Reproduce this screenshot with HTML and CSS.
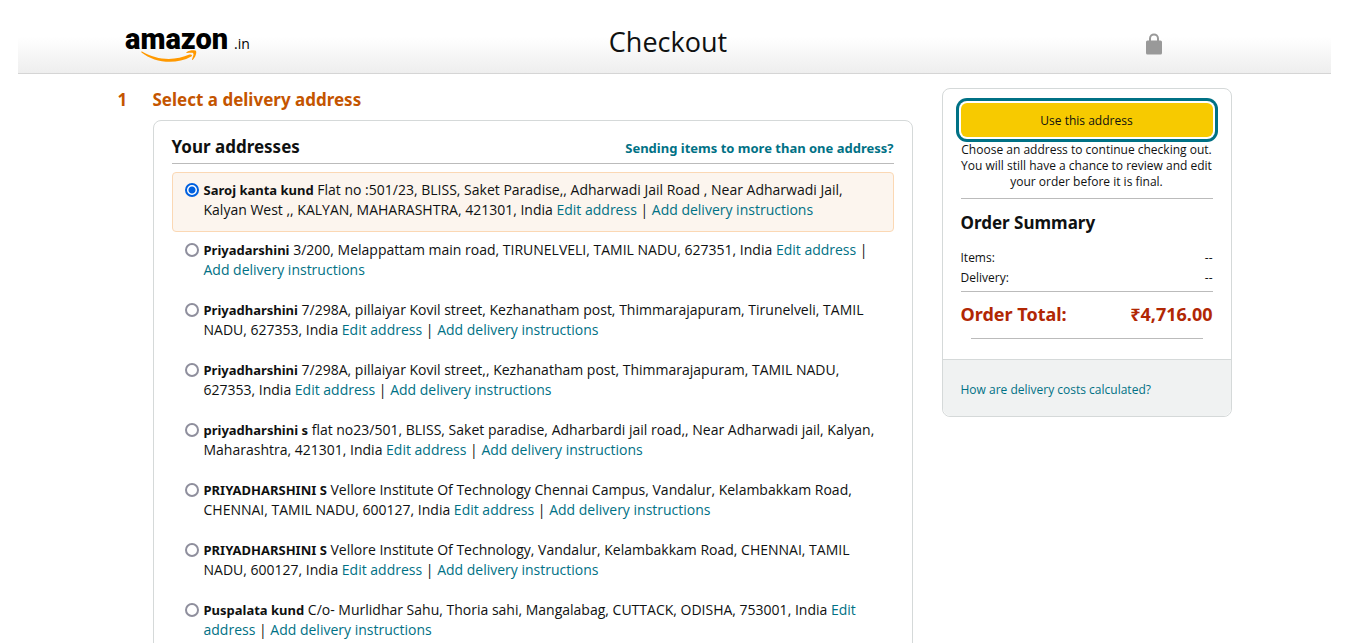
FILE: index.html
```html
<!DOCTYPE html>
<html lang="en">
<head>
<meta charset="utf-8">
<title>Checkout</title>
<link rel="stylesheet" href="styles.css">
</head>
<body>
<header class="site-header">
  <div class="header-inner">
    <a class="logo" href="#" aria-label="amazon.in">
      <svg width="126" height="42" viewBox="0 -3 126 42" overflow="visible">
        <text class="logo-name" x="0" y="23">amazon</text>
        <text class="logo-tld" x="109" y="23">.in</text>
        <path fill="#f90" d="M17 25.500C32 34.500 50 35 64.500 28.600C66.500 27.800 68 29.300 66.300 30.500C50 39.500 29 36.500 16.500 26.400C15.900 25.800 16.400 25.200 17 25.500ZM61.500 26.300C64.500 24 70 24 71 25C71.900 26.500 70.500 31.500 67.800 33.700C67.300 34.100 66.800 33.800 67 33.200C67.900 30.900 69 28.300 68.300 27.400C67.600 26.500 64.600 26.900 62 27.100C61.300 27.200 61 26.700 61.500 26.300Z"/>
      </svg>
    </a>
    <h1 class="page-title">Checkout</h1>
    <svg class="lock" width="16" height="22" viewBox="0 0 16 22" role="img" aria-label="Secure">
      <path d="M4 9V5.500C4 0 12 0 12 5.500V9" fill="none" stroke="#999" stroke-width="2"/>
      <rect y="7.500" width="16" height="14" rx="1.500" fill="#999"/>
    </svg>
  </div>
</header>
<main class="layout">
  <section class="step">
    <h2 class="step-title"><span class="step-number">1</span><span>Select a delivery address</span></h2>
    <div class="card addresses">
      <div class="addresses-head">
        <h3 class="heading">Your addresses</h3>
        <a class="multi" href="#">Sending items to more than one address?</a>
      </div>
      <div class="address selected">
        <input type="radio" name="address" id="a1" checked>
        <div><label for="a1"><b>Saroj kanta kund</b> Flat no :501/23, BLISS, Saket Paradise,, Adharwadi Jail Road , Near Adharwadi Jail,<br>Kalyan West ,, KALYAN, MAHARASHTRA, 421301, India</label> <a href="#">Edit address</a> | <a href="#">Add delivery instructions</a></div>
      </div>
      <div class="address">
        <input type="radio" name="address" id="a2">
        <div><label for="a2"><b>Priyadarshini</b> 3/200, Melappattam main road, TIRUNELVELI, TAMIL NADU, 627351, India</label> <a href="#">Edit address</a> |<br><a href="#">Add delivery instructions</a></div>
      </div>
      <div class="address">
        <input type="radio" name="address" id="a3">
        <div><label for="a3"><b>Priyadharshini</b> 7/298A, pillaiyar Kovil street, Kezhanatham post, Thimmarajapuram, Tirunelveli, TAMIL<br>NADU, 627353, India</label> <a href="#">Edit address</a> | <a href="#">Add delivery instructions</a></div>
      </div>
      <div class="address">
        <input type="radio" name="address" id="a4">
        <div><label for="a4"><b>Priyadharshini</b> 7/298A, pillaiyar Kovil street,, Kezhanatham post, Thimmarajapuram, TAMIL NADU,<br>627353, India</label> <a href="#">Edit address</a> | <a href="#">Add delivery instructions</a></div>
      </div>
      <div class="address">
        <input type="radio" name="address" id="a5">
        <div><label for="a5"><b>priyadharshini s</b> flat no23/501, BLISS, Saket paradise, Adharbardi jail road,, Near Adharwadi jail, Kalyan,<br>Maharashtra, 421301, India</label> <a href="#">Edit address</a> | <a href="#">Add delivery instructions</a></div>
      </div>
      <div class="address">
        <input type="radio" name="address" id="a6">
        <div><label for="a6"><b>PRIYADHARSHINI S</b> Vellore Institute Of Technology Chennai Campus, Vandalur, Kelambakkam Road,<br>CHENNAI, TAMIL NADU, 600127, India</label> <a href="#">Edit address</a> | <a href="#">Add delivery instructions</a></div>
      </div>
      <div class="address">
        <input type="radio" name="address" id="a7">
        <div><label for="a7"><b>PRIYADHARSHINI S</b> Vellore Institute Of Technology, Vandalur, Kelambakkam Road, CHENNAI, TAMIL<br>NADU, 600127, India</label> <a href="#">Edit address</a> | <a href="#">Add delivery instructions</a></div>
      </div>
      <div class="address">
        <input type="radio" name="address" id="a8">
        <div><label for="a8"><b>Puspalata kund</b> C/o- Murlidhar Sahu, Thoria sahi, Mangalabag, CUTTACK, ODISHA, 753001, India</label> <a href="#">Edit<br>address</a> | <a href="#">Add delivery instructions</a></div>
      </div>
    </div>
  </section>
  <aside class="card summary">
    <div class="summary-body">
      <button class="use-address" type="button">Use this address</button>
      <p class="hint">Choose an address to continue checking out.<br>You will still have a chance to review and edit<br>your order before it is final.</p>
      <h3 class="heading summary-title">Order Summary</h3>
      <dl class="costs">
        <div class="cost"><dt>Items:</dt><dd>--</dd></div>
        <div class="cost"><dt>Delivery:</dt><dd>--</dd></div>
      </dl>
      <div class="total"><span>Order Total:</span><span>₹4,716.00</span></div>
      <hr class="end-rule">
    </div>
    <div class="summary-foot"><a href="#">How are delivery costs calculated?</a></div>
  </aside>
</main>
</body>
</html>
```
FILE: styles.css
```css
* { box-sizing: border-box; }
body {
  margin: 0;
  padding: 0 35px 0 18px;
  background: #fff;
  color: #0f1111;
  font: 14px/20px "Open Sans", "Noto Sans", sans-serif;
}
h1, h2, h3, p, dl, dd { margin: 0; }
a { color: #007185; text-decoration: none; }
b { font: 700 13px/20px "Noto Sans", sans-serif; }

.site-header {
  height: 74px;
  border-bottom: 1px solid #d5d5d5;
  background: linear-gradient(#fff 50%, #eee);
}
.header-inner {
  display: grid;
  grid-template-columns: 1fr auto 1fr;
  align-items: center;
  max-width: 1114px;
  height: 100%;
  margin: 0 auto;
  padding: 14px 70px 0 7px;
}
.logo { display: flex; }
.logo-name { font: 900 29px Roboto, sans-serif; }
.logo-tld { font: 14px "Open Sans", sans-serif; }
.page-title { margin: 0 0 4px 50px; font-size: 27px; line-height: 36px; font-weight: 400; }
.lock { justify-self: end; }

.layout {
  display: grid;
  grid-template-columns: minmax(0, 1fr) 290px;
  column-gap: 29px;
  align-items: start;
  max-width: 1114px;
  margin: 0 auto;
  padding-top: 14px;
}
.card { border: 1px solid #d5d9d9; border-radius: 8px; }
.step-title, .heading, .multi, .total { font-family: "Noto Sans", sans-serif; font-weight: 700; }
.step-title {
  display: flex;
  color: #c45500;
  font-size: 17px;
  line-height: 24px;
}
.step-number { width: 35px; }
.addresses { margin: 8px 0 0 35px; padding: 14px 18px; }
.addresses-head {
  display: flex;
  justify-content: space-between;
  align-items: baseline;
  padding-bottom: 4px;
  margin-bottom: 8px;
  border-bottom: 1px solid #bbb;
}
.heading { font-size: 17px; line-height: 24px; }
.multi { font-size: 13px; }
.address {
  display: flex;
  gap: 4px;
  padding: 7px 12px 11px;
  border: 1px solid transparent;
  border-radius: 4px;
  white-space: nowrap;
}
.selected { background: #fcf5ee; border-color: #fbd8b4; }
.address input {
  flex: none;
  appearance: none;
  width: 14px;
  height: 14px;
  margin: 3px 1px 0 0;
  border: 2px solid #8f8f9d;
  border-radius: 50%;
  background: #fff;
}
.address input:checked {
  border-color: #0060df;
  background: radial-gradient(circle, #0060df 3px, #fff 4px);
}

.summary-body { padding: 14px 18px 20px; }
.use-address {
  display: block;
  width: 100%;
  height: 34px;
  padding: 2px 0 0;
  border: 0;
  border-radius: 6px;
  background: #f7ca00;
  box-shadow: 0 0 0 2px #fff, 0 0 0 5px #007185;
  color: #0f1111;
  font: inherit;
  font-size: 12px;
}
.hint {
  padding: 5px 0 8px;
  border-bottom: 1px solid #bbb;
  font-size: 12px;
  line-height: 16px;
  text-align: center;
  white-space: nowrap;
}
.summary-title { padding: 12px 0 13px; box-sizing: content-box; }
.costs { padding-bottom: 3px; border-bottom: 1px solid #bbb; font-size: 12px; }
.cost { display: flex; justify-content: space-between; }
.total {
  display: flex;
  justify-content: space-between;
  padding: 10px 0 12px;
  color: #b12704;
  font-size: 18px;
  line-height: 24px;
}
.end-rule { margin: 0 10px; border: 0; border-top: 1px solid #bbb; }
.summary-foot {
  padding: 20px 18px 16px;
  border-top: 1px solid #d5d9d9;
  border-radius: 0 0 8px 8px;
  background: #f0f2f2;
  font-size: 12px;
}
```
